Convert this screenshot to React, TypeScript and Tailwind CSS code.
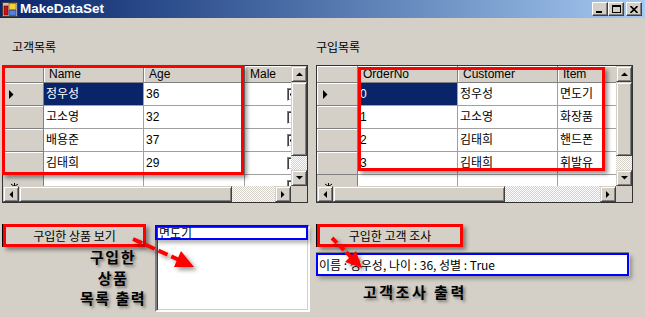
import React from "react";

const FONT = "font-['Liberation_Sans','Noto_Sans_CJK_KR',sans-serif]";
const KFONT = "font-['Noto_Sans_CJK_KR','Liberation_Sans',sans-serif]";

function Tri({ dir }: { dir: "up" | "down" | "left" | "right" }) {
  const pts =
    dir === "up"
      ? "0,4 7,4 3.5,0.5"
      : dir === "down"
      ? "0,0 7,0 3.5,3.5"
      : dir === "left"
      ? "4,0 4,7 0.5,3.5"
      : "0,0 0,7 3.5,3.5";
  const w = dir === "up" || dir === "down" ? 7 : 4;
  const h = dir === "up" || dir === "down" ? 4 : 7;
  return (
    <svg width={w} height={h} viewBox={`0 0 ${w} ${h}`}>
      <polygon points={pts} fill="#000" />
    </svg>
  );
}

function SBtn({ dir }: { dir: "up" | "down" | "left" | "right" }) {
  return (
    <div className="w-[16px] h-[16px] shrink-0 bg-[#d4d0c8] border border-t-[#d4d0c8] border-l-[#d4d0c8] border-r-[#404040] border-b-[#404040] shadow-[inset_1px_1px_#fff,inset_-1px_-1px_#808080] flex items-center justify-center">
      <Tri dir={dir} />
    </div>
  );
}

const THUMB =
  "bg-[#d4d0c8] border border-t-[#d4d0c8] border-l-[#d4d0c8] border-r-[#404040] border-b-[#404040] shadow-[inset_1px_1px_#fff,inset_-1px_-1px_#808080]";
const HATCH =
  "bg-[image:repeating-conic-gradient(#ffffff_0_25%,#d4d0c8_0_50%)] bg-[length:2px_2px]";

function CheckBox({ checked }: { checked: boolean }) {
  return (
    <div className="w-[13px] h-[13px] bg-white border border-t-[#808080] border-l-[#808080] border-r-white border-b-white shadow-[inset_1px_1px_#404040,inset_-1px_-1px_#d4d0c8] flex items-center pl-[2px]">
      {checked && (
        <svg width="7" height="7" viewBox="0 0 7 7">
          <path d="M0 2 L0 4 L2 6 L7 1 L7 -1 L2 4 Z" fill="#000" />
        </svg>
      )}
    </div>
  );
}

type Cell = string | boolean;
type Col = { w: number; label: string };

function Grid({
  cols,
  rows,
  thumbW,
  width,
}: {
  cols: Col[];
  rows: Cell[][];
  thumbW: number;
  width: number;
}) {
  return (
    <div
      className="h-[138px] border border-[#333] bg-[#d4d0c8] flex flex-col"
      style={{ width }}
    >
      <div className="flex h-[120px]">
        <div className="flex-1 overflow-hidden bg-[#d4d0c8]">
          <div className="flex h-[17px] w-max">
            <div className="w-[41px] h-full border-r border-b border-[#808080] shadow-[inset_1px_1px_#fff]" />
            {cols.map((c, i) => (
              <div
                key={i}
                className="h-full border-r border-b border-[#808080] shadow-[inset_1px_1px_#fff] pl-[5px] text-[12px] leading-[16px] text-black"
                style={{ width: c.w }}
              >
                {c.label}
              </div>
            ))}
          </div>
          {rows.map((r, ri) => (
            <div key={ri} className="flex h-[23px] w-max">
              <div className="w-[41px] h-full border-r border-b border-[#808080] shadow-[inset_1px_1px_#fff] flex items-center pl-[6px]">
                {ri === 0 && (
                  <svg width="5" height="9" viewBox="0 0 5 9">
                    <polygon points="0,0 0,9 4.5,4.5" fill="#000" />
                  </svg>
                )}
              </div>
              {r.map((v, ci) => {
                const sel = ri === 0 && ci === 0;
                return (
                  <div
                    key={ci}
                    className={
                      "h-full border-r border-b border-[#a0a0a0] flex items-center text-[12px] " +
                      (sel ? "bg-[#0a246a] text-white" : "bg-white text-black")
                    }
                    style={{ width: cols[ci].w }}
                  >
                    {typeof v === "boolean" ? (
                      <div className="ml-[42px]">
                        <CheckBox checked={v} />
                      </div>
                    ) : (
                      <span className="pl-[2px]">{v}</span>
                    )}
                  </div>
                );
              })}
            </div>
          ))}
          <div className="flex h-[23px] w-max">
            <div className="w-[41px] h-full border-r border-[#808080] flex items-center pl-[8px]">
              <svg width="7" height="7" viewBox="0 0 7 7">
                <path d="M3.5 0 V7 M0 1 L7 6 M7 1 L0 6" stroke="#000" strokeWidth="1" />
              </svg>
            </div>
            {cols.map((c, ci) => (
              <div
                key={ci}
                className="h-full border-r border-[#a0a0a0] bg-white flex items-center"
                style={{ width: c.w }}
              >
                {typeof rows[0][ci] === "boolean" && (
                  <div className="ml-[42px]">
                    <CheckBox checked={false} />
                  </div>
                )}
              </div>
            ))}
          </div>
        </div>
        <div className="w-[16px] flex flex-col">
          <SBtn dir="up" />
          <div className={"h-[74px] " + THUMB} />
          <div className={"flex-1 " + HATCH} />
          <SBtn dir="down" />
        </div>
      </div>
      <div className="flex h-[16px]">
        <SBtn dir="left" />
        <div className={"h-full " + THUMB} style={{ width: thumbW }} />
        <div className={"flex-1 h-full " + HATCH} />
        <SBtn dir="right" />
        <div className="w-[16px] h-full bg-[#d4d0c8]" />
      </div>
    </div>
  );
}

function TitleBar() {
  return (
    <div className="h-[18px] flex items-center bg-gradient-to-r from-[#0a246a] to-[#a6caf0]">
      <svg width="16" height="16" viewBox="0 0 16 16" className="ml-[2px]">
        <rect x="0.5" y="1.5" width="15" height="14" fill="#c0c0c0" stroke="#404040" />
        <rect x="2" y="5" width="4" height="9" fill="#d01010" stroke="#600" strokeWidth="0.6" />
        <rect x="7" y="2.5" width="7" height="6" fill="#f8d030" stroke="#806000" strokeWidth="0.6" />
        <rect x="7" y="9.5" width="7" height="5" fill="#5080e0" stroke="#203080" strokeWidth="0.6" />
      </svg>
      <span className="ml-[2px] text-white font-bold text-[13.5px] leading-[18px] font-['Liberation_Sans',sans-serif]">
        MakeDataSet
      </span>
      <div className="ml-auto flex items-center pr-[3px]">
        <div className="w-[16px] h-[14px] bg-[#d4d0c8] border border-t-white border-l-white border-r-[#404040] border-b-[#404040] shadow-[inset_-1px_-1px_#808080] flex items-end justify-center pb-[2px] pr-[2px]">
          <div className="w-[6px] h-[2px] bg-black" />
        </div>
        <div className="w-[16px] h-[14px] bg-[#d4d0c8] border border-t-white border-l-white border-r-[#404040] border-b-[#404040] shadow-[inset_-1px_-1px_#808080] flex items-center justify-center">
          <div className="w-[9px] h-[8px] border border-black border-t-2" />
        </div>
        <div className="ml-[2px] w-[16px] h-[14px] bg-[#d4d0c8] border border-t-white border-l-white border-r-[#404040] border-b-[#404040] shadow-[inset_-1px_-1px_#808080] flex items-center justify-center">
          <svg width="8" height="7" viewBox="0 0 8 7">
            <path d="M0.5 0 L7.5 7 M7.5 0 L0.5 7" stroke="#000" strokeWidth="1.6" />
          </svg>
        </div>
      </div>
    </div>
  );
}

export default function App() {
  const leftRows: Cell[][] = [
    ["정우성", "36", true],
    ["고소영", "32", false],
    ["배용준", "37", true],
    ["김태희", "29", false],
  ];
  const rightRows: Cell[][] = [
    ["0", "정우성", "면도기"],
    ["1", "고소영", "화장품"],
    ["2", "김태희", "핸드폰"],
    ["3", "김태희", "휘발유"],
  ];
  const redShadow = "shadow-[3px_3px_4px_rgba(0,0,0,0.4)]";
  const textShadow = "[text-shadow:2px_2px_3px_rgba(0,0,0,0.45)]";
  return (
    <div className={"w-[645px] h-[317px] bg-[#d4d0c8] overflow-hidden relative " + FONT}>
      <TitleBar />
      <div className="flex pl-[2px] pt-[22px] gap-[8px]">
        <div className="w-[306px]">
          <div className={"pl-[10px] h-[14px] text-[12px] leading-[14px] text-black " + KFONT}>고객목록</div>
          <div className="mt-[11px] relative">
            <Grid
              width={306}
              thumbW={213}
              cols={[
                { w: 100, label: "Name" },
                { w: 101, label: "Age" },
                { w: 80, label: "Male" },
              ]}
              rows={leftRows}
            />
            <div className={"absolute left-0 top-0 w-[242px] h-[110px] border-[3px] border-[#ff0000] " + redShadow} />
          </div>
        </div>
        <div className="w-[317px]">
          <div className={"h-[14px] text-[12px] leading-[14px] text-black " + KFONT}>구입목록</div>
          <div className="mt-[11px] relative">
            <Grid
              width={317}
              thumbW={172}
              cols={[
                { w: 100, label: "OrderNo" },
                { w: 100, label: "Customer" },
                { w: 80, label: "Item" },
              ]}
              rows={rightRows}
            />
            <div className={"absolute left-[42px] top-[2px] w-[247px] h-[104px] border-[3px] border-[#ff0000] " + redShadow} />
          </div>
        </div>
      </div>

      <div className="flex pl-[2px] mt-[21px]">
        <div className="w-[153px]">
          <div className={"ml-[1px] w-[143px] h-[23px] bg-[#d4d0c8] border-[3px] border-[#ff0000] shadow-[-1px_0_0_#000,3px_3px_4px_rgba(0,0,0,0.4)] flex items-center justify-center text-[12px] text-black " + KFONT}>
            구입한 상품 보기
          </div>
          <div className={"ml-[61px] w-[100px] text-center font-bold text-[15px] leading-[20.5px] tracking-[1.5px] text-black " + KFONT + " " + textShadow}>
            <div>구입한</div>
            <div>상품</div>
            <div className="whitespace-nowrap">목록 출력</div>
          </div>
        </div>
        <div className="mt-[1px] w-[155px] h-[87px] relative bg-white border-2 border-t-[#808080] border-l-[#808080] border-r-white border-b-white shadow-[inset_1px_1px_#404040,inset_-1px_-1px_#d4d0c8]">
          <div className={"pl-[2px] text-[12px] leading-[12px] text-black " + KFONT}>면도기</div>
          <div className="absolute left-[-2px] top-[-2px] w-[153px] h-[15px] border-2 border-[#0000ff] shadow-[2px_3px_4px_rgba(0,0,0,0.3)]" />
        </div>
        <div className="ml-[6px] flex flex-col">
          <div className={"ml-[1px] w-[146px] h-[23px] bg-[#d4d0c8] border-[3px] border-[#ff0000] shadow-[-1px_0_0_#000,3px_3px_4px_rgba(0,0,0,0.4)] flex items-center justify-center text-[12px] text-black " + KFONT}>
            구입한 고객 조사
          </div>
          <div className={"mt-[6px] w-[313px] h-[23px] bg-white border-2 border-[#0000ff] shadow-[0_-1px_0_#808080,1px_0_0_#d4d0c8,3px_3px_4px_rgba(0,0,0,0.3)] flex items-center pl-[1px] text-[12px] text-black " + KFONT}>
            이름 : 정우성, 나이 : 36, 성별 : True
          </div>
          <div className={"mt-[7px] ml-[47px] font-bold text-[15px] leading-[18px] tracking-[2.5px] text-black " + KFONT + " " + textShadow}>
            고객조사 출력
          </div>
        </div>
      </div>

      <svg
        className="absolute left-0 top-0 pointer-events-none"
        width="645"
        height="317"
        viewBox="0 0 645 317"
      >
        <defs>
          <filter id="sh" x="-20%" y="-20%" width="160%" height="160%">
            <feDropShadow dx="3" dy="3" stdDeviation="2" floodColor="#000" floodOpacity="0.4" />
          </filter>
        </defs>
        <g filter="url(#sh)">
          <line x1="133" y1="239" x2="178" y2="259.5" stroke="#ff0000" strokeWidth="4" strokeDasharray="10 4" />
          <polygon points="194,267 174,267 181,251" fill="#ff0000" />
          <line x1="332" y1="238" x2="352" y2="258" stroke="#ff0000" strokeWidth="4" strokeDasharray="7 3" />
          <polygon points="362,268 345,262 356,251" fill="#ff0000" />
        </g>
      </svg>
    </div>
  );
}
